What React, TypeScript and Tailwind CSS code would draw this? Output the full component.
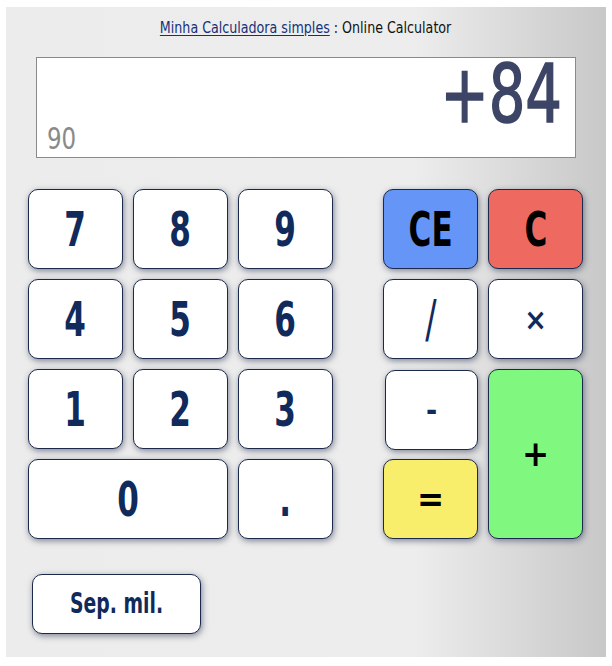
import React from "react"

const font = { fontFamily: '"DejaVu Sans Condensed", "Liberation Sans", sans-serif' }

type Key = {
  label: string
  className?: string
  narrow?: boolean
}

const btnBase =
  "flex items-center justify-center rounded-[10px] border border-[#1b2a4c] shadow-[1px_2px_6px_rgba(40,50,80,0.55)] text-[#102a5c] select-none"

function Btn({ label, className = "", narrow = true }: Key) {
  return (
    <div className={`${btnBase} ${className}`}>
      <span className={narrow ? "inline-block scale-x-[0.72]" : "inline-block"}>{label}</span>
    </div>
  )
}

export default function App() {
  return (
    <div className="min-h-[666px] w-[612px] bg-white pt-[7px] pl-[6px]" style={font}>
      <div className="w-[600px] h-[650px] bg-[linear-gradient(to_right,#ececec_0%,#ededed_68%,#c8c8c8_100%)] flex flex-col">
        {/* Title */}
        <div className="h-[40px] flex items-center justify-center pt-[2px] text-[16px] text-[#111]">
          <span className="inline-block scale-x-[0.88] whitespace-nowrap">
            <span className="text-[#14307a] underline underline-offset-2">Minha Calculadora simples</span>
            <span>&nbsp;: Online Calculator</span>
          </span>
        </div>

        {/* Display */}
        <div className="ml-[30px] mt-[10px] w-[540px] h-[101px] bg-white border border-[#8a8a8a] relative">
          <div className="absolute right-[13px] top-[2px] text-[80px] leading-[70px] text-[#3d4566] [-webkit-text-stroke:1.6px_#3d4566] origin-right scale-x-[0.8]">
            +84
          </div>
          <div className="absolute left-[10px] bottom-[3px] text-[30px] leading-none text-[#8a8a8a] origin-left scale-x-[0.85]">
            90
          </div>
        </div>

        {/* Keypad */}
        <div className="flex ml-[22px] mt-[31px] gap-[50px]">
          <div className="grid grid-cols-[95px_95px_95px] grid-rows-[80px_80px_80px_80px] gap-[10px] text-[48px] font-bold">
            <Btn label="7" className="bg-white" />
            <Btn label="8" className="bg-white" />
            <Btn label="9" className="bg-white" />
            <Btn label="4" className="bg-white" />
            <Btn label="5" className="bg-white" />
            <Btn label="6" className="bg-white" />
            <Btn label="1" className="bg-white" />
            <Btn label="2" className="bg-white" />
            <Btn label="3" className="bg-white" />
            <Btn label="0" className="bg-white col-span-2" />
            <Btn label="." className="bg-white" />
          </div>
          <div className="grid grid-cols-[95px_95px] grid-rows-[80px_80px_80px_80px] gap-[10px] text-[48px] font-bold">
            <Btn label="CE" className="bg-[#6495f7] text-black" />
            <Btn label="C" className="bg-[#ee6a60] text-black" />
            <Btn label="/" className="bg-white font-normal text-[52px]" />
            <Btn label="×" className="bg-white text-[30px]" narrow={false} />
            <Btn label="-" className="bg-white text-[30px] ml-[2px] mt-[1px] -mb-[1px]" narrow={false} />
            <Btn label="+" className="bg-[#80f880] row-span-2 text-black text-[36px]" narrow={false} />
            <Btn label="=" className="bg-[#f9ee6b] text-black text-[36px]" narrow={false} />
          </div>
        </div>

        {/* Thousands separator */}
        <div className="ml-[26px] mt-[35px]">
          <Btn label="Sep. mil." className="bg-white w-[169px] h-[60px] text-[29px] font-bold" />
        </div>
      </div>
    </div>
  )
}
